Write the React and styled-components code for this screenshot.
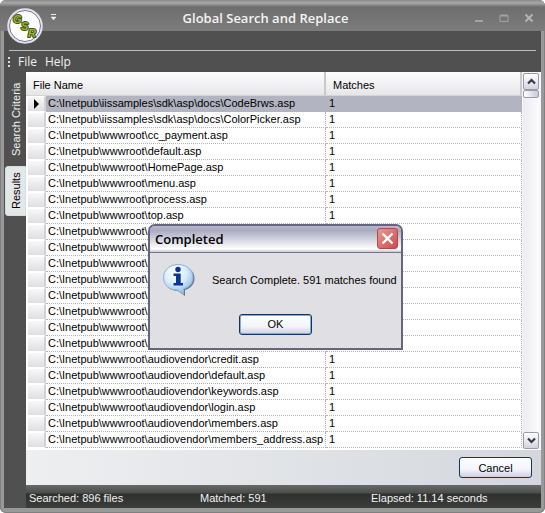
import styled, { createGlobalStyle } from "styled-components";

const root = "C:\\Inetpub\\wwwroot\\";

const Files = [
    "C:\\Inetpub\\iissamples\\sdk\\asp\\docs\\CodeBrws.asp",
    "C:\\Inetpub\\iissamples\\sdk\\asp\\docs\\ColorPicker.asp",
    root + "cc_payment.asp",
    root + "default.asp",
    root + "HomePage.asp",
    root + "menu.asp",
    root + "process.asp",
    root + "top.asp",
    root,
    root,
    root,
    root,
    root,
    root,
    root,
    root,
    root + "audiovendor\\credit.asp",
    root + "audiovendor\\default.asp",
    root + "audiovendor\\keywords.asp",
    root + "audiovendor\\login.asp",
    root + "audiovendor\\members.asp",
    root + "audiovendor\\members_address.asp",
];

const Logo = () => (
    <svg width="36" height="36" viewBox="0 0 36 36" aria-label="GSR">
        <circle cx="18" cy="18" r="17" fill="#f4f2fa" stroke="#e2e0ea" strokeWidth="1.5" />
        <circle cx="18" cy="18" r="15.5" fill="#fff" stroke="#7a7192" strokeWidth="1" />
        <LogoLetter x="6" y="15">G</LogoLetter>
        <LogoLetter x="14" y="22">S</LogoLetter>
        <LogoLetter x="21" y="29">R</LogoLetter>
    </svg>
);

const InfoIcon = () => (
    <svg width="34" height="34" viewBox="0 0 34 34" aria-hidden="true">
        <defs>
            <radialGradient id="bubble" cx="40%" cy="28%" r="75%">
                <stop offset="0" stopColor="#fff" />
                <stop offset="0.5" stopColor="#d9edfb" />
                <stop offset="1" stopColor="#86b9e4" />
            </radialGradient>
        </defs>
        <path d="M17 3C26 3 32.500 8 32.500 15C32.500 21 29 25 23 27V33L16 28C8 28 3 23 3 16C3 8 9 3 17 3Z" fill="#6b7288" />
        <path d="M16 1.500C25 1.500 31 7 31 14.500C31 20 28 24 21.500 26V31L15 27C7 27 1.500 22 1.500 14.500C1.500 7 8 1.500 16 1.500Z" fill="url(#bubble)" stroke="#8fb2d6" />
        <circle cx="16" cy="6.500" r="2.700" fill="#0b3496" />
        <path d="M11.500 10.500H18.700V20H21V22.500H11.500V20H14V13H11.500Z" fill="#0b3496" />
    </svg>
);

const Chevron = ({ up }) => (
    <svg width="9" height="7" viewBox="0 0 9 7" aria-hidden="true">
        <path d={up ? "M1 5.500L4.500 2L8 5.500" : "M1 1.500L4.500 5L8 1.500"} fill="none" stroke="#383848" strokeWidth="2.200" />
    </svg>
);

const App = () => {
    return (
        <>
            <GlobalStyle />
            <Window>
                <TitleBar>
                    <LogoBox><Logo /></LogoBox>
                    <QuickButton aria-label="Customize">
                        <svg width="7" height="7" viewBox="0 0 7 7">
                            <path d="M1 0.500H6" stroke="#eee" />
                            <path d="M1 3H6L3.500 6Z" fill="#eee" stroke="#eee" strokeWidth="0.500" />
                        </svg>
                    </QuickButton>
                    <Title>Global Search and Replace</Title>
                    <WindowButtons>
                        <WindowButton aria-label="Minimize">
                            <svg width="10" height="10"><path d="M1 8H9" stroke="#a2a2a2" strokeWidth="2" /></svg>
                        </WindowButton>
                        <WindowButton aria-label="Maximize">
                            <svg width="10" height="10"><path d="M1 2.500H9V8.500H1Z" stroke="#a2a2a2" fill="none" /><path d="M1 2.500H9" stroke="#a2a2a2" strokeWidth="2" /></svg>
                        </WindowButton>
                        <WindowButton aria-label="Close">
                            <svg width="10" height="10"><path d="M1.500 1.500L8.500 8.500M8.500 1.500L1.500 8.500" stroke="#b4b4b4" strokeWidth="2" /></svg>
                        </WindowButton>
                    </WindowButtons>
                </TitleBar>
                <Frame>
                    <Ribbon />
                    <MenuBar>
                        <Grip />
                        <MenuItem>File</MenuItem>
                        <MenuItem>Help</MenuItem>
                    </MenuBar>
                    <Workspace>
                        <Tabs role="tablist">
                            <Tab role="tab" aria-selected="false">Search Criteria</Tab>
                            <Tab role="tab" aria-selected="true" $active>Results</Tab>
                        </Tabs>
                        <Panel>
                            <Grid>
                                <TableBox>
                                    <Table>
                                        <colgroup>
                                            <col width="20" />
                                            <col width="280" />
                                            <col />
                                        </colgroup>
                                        <thead>
                                            <tr>
                                                <HeadCell colSpan={2}>File Name</HeadCell>
                                                <HeadCell>Matches</HeadCell>
                                            </tr>
                                        </thead>
                                        <tbody>
                                            {Files.map((file, i) => (
                                                <Row key={i} $selected={i === 0}>
                                                    <MarkCell>
                                                        {i === 0 && <svg width="5" height="10"><path d="M0 0L5 5L0 10Z" /></svg>}
                                                    </MarkCell>
                                                    <Cell>{file}</Cell>
                                                    <Cell $count>1</Cell>
                                                </Row>
                                            ))}
                                        </tbody>
                                    </Table>
                                </TableBox>
                                <ScrollBar>
                                    <ScrollButton aria-label="Scroll up"><Chevron up /></ScrollButton>
                                    <Thumb />
                                    <Track />
                                    <ScrollButton aria-label="Scroll down"><Chevron /></ScrollButton>
                                </ScrollBar>
                            </Grid>
                            <ButtonBar>
                                <XpButton>Cancel</XpButton>
                            </ButtonBar>
                            <StatusBar>
                                <span>Searched: 896 files</span>
                                <span>Matched: 591</span>
                                <span>Elapsed: 11.14 seconds</span>
                            </StatusBar>
                        </Panel>
                    </Workspace>
                </Frame>
                <Overlay>
                    <Dialog role="dialog" aria-labelledby="dialog-title">
                        <DialogTitleBar>
                            <DialogTitle id="dialog-title">Completed</DialogTitle>
                            <CloseButton aria-label="Close dialog">
                                <svg width="13" height="13"><path d="M1.500 1.500L11.500 11.500M11.500 1.500L1.500 11.500" stroke="#fff" strokeWidth="2.400" /></svg>
                            </CloseButton>
                        </DialogTitleBar>
                        <DialogBody>
                            <Message>
                                <InfoIcon />
                                <MessageText>Search Complete. 591 matches found</MessageText>
                            </Message>
                            <XpButton $focused>OK</XpButton>
                        </DialogBody>
                    </Dialog>
                </Overlay>
            </Window>
        </>
    );
};

export default App;

const GlobalStyle = createGlobalStyle`
    * {
        box-sizing: border-box;
    }
    body {
        margin: 0;
        background: #fff;
        font-family: "Liberation Sans", Arial, sans-serif;
        font-size: 11px;
        color: #000;
    }
    button {
        font: inherit;
        padding: 0;
        border: 0;
        background: none;
        color: inherit;
    }
    svg {
        display: block;
        flex-shrink: 0;
    }
`;

const Window = styled.div`
    position: relative;
    display: flex;
    flex-direction: column;
    min-height: 100vh;
    background: #999;
    border-radius: 6px;
    box-shadow: inset 0 0 0 1px #808080;
    overflow: hidden;
`;

const TitleBar = styled.header`
    display: flex;
    align-items: center;
    height: 31px;
    padding: 4px 7px 0;
    background: linear-gradient(#8a8a8a, #a8a8a8 3px, #8a8a8a 5px, #6e6e6e 7px, #7c7c7c);
`;

const LogoBox = styled.div`
    position: relative;
    z-index: 1;
    width: 36px;
    height: 19px;
`;

const LogoLetter = styled.text`
    font: italic bold 11px/1 "Liberation Sans", sans-serif;
    fill: #93b52c;
    stroke: #47521c;
    stroke-width: 2px;
    stroke-linejoin: round;
    paint-order: stroke;
`;

const QuickButton = styled.button`
    margin-left: 7px;
`;

const Title = styled.h1`
    flex: 1;
    margin: 0;
    text-align: center;
    color: #f4f4f4;
    font: 600 13px/20px "Open Sans", sans-serif;
`;

const WindowButtons = styled.div`
    display: flex;
    gap: 15px;
    padding-right: 4px;
`;

const WindowButton = styled.button`
    width: 10px;
`;

const Frame = styled.div`
    flex: 1;
    display: flex;
    flex-direction: column;
    margin: 0 4px 5px;
    background: #505050;
`;

const Ribbon = styled.div`
    height: 20px;
    margin: 0 5px;
    border-bottom: 1px solid #bdbdbd;
`;

const MenuBar = styled.nav`
    display: flex;
    align-items: center;
    gap: 8px;
    height: 21px;
    padding-left: 4px;
`;

const Grip = styled.div`
    width: 2px;
    height: 10px;
    background: repeating-linear-gradient(#ddd 0 2px, transparent 2px 4px);
`;

const MenuItem = styled.button`
    color: #f2f2f2;
    font: 12px/20px "Open Sans", sans-serif;
`;

const Workspace = styled.main`
    flex: 1;
    display: flex;
`;

const Tabs = styled.div`
    display: flex;
    flex-direction: column;
    width: 22px;
    padding-top: 4px;
`;

const Tab = styled.button`
    writing-mode: vertical-rl;
    transform: rotate(180deg);
    width: 21px;
    height: ${(p) => (p.$active ? "50px" : "90px")};
    padding-top: ${(p) => (p.$active ? "0" : "4px")};
    align-self: flex-end;
    border: ${(p) => (p.$active ? "1px solid #c5e4e4" : "0")};
    border-radius: 0 3px 3px 0;
    background: ${(p) => (p.$active ? "#e4e6e8" : "none")};
    color: ${(p) => (p.$active ? "#000" : "#f0f0f0")};
    text-align: center;
`;

const Panel = styled.div`
    flex: 1;
    display: flex;
    flex-direction: column;
    min-width: 0;
`;

const Grid = styled.div`
    flex: 1;
    display: flex;
    padding-bottom: 1px;
    background: #fff;
`;

const TableBox = styled.div`
    flex: 1;
    min-width: 0;
`;

const Table = styled.table`
    width: 100%;
    table-layout: fixed;
    border-collapse: separate;
    border-spacing: 0;
`;

const HeadCell = styled.th`
    height: 24px;
    padding: 2px 7px 0;
    border-right: 2px solid #c9c9cb;
    border-bottom: 1px solid #d5d5d8;
    background: linear-gradient(#fff, #e6e6e8);
    font-weight: normal;
    text-align: left;
`;

const Row = styled.tr`
    background: ${(p) => (p.$selected ? "#b2b4c2" : "#fff")};
`;

const Cell = styled.td`
    height: 16px;
    padding: 0 0 0 ${(p) => (p.$count ? "3px" : "2px")};
    border-right: 1px dotted #b4b4b4;
    border-bottom: 1px dotted #b4b4b4;
    line-height: 15px;
    white-space: nowrap;
`;

const MarkCell = styled.td`
    padding: 0 0 0 6px;
    border: 1px solid #fff;
    border-left: 2px solid #fff;
    border-right: 2px solid #d2d2d6;
    background: linear-gradient(#f8f8f9, #dedee2);
`;

const ScrollBar = styled.div`
    display: flex;
    flex-direction: column;
    width: 19px;
    padding: 1px 2px 0 1px;
    background: #f6f6fa;
`;

const ScrollButton = styled.button`
    display: flex;
    align-items: center;
    justify-content: center;
    width: 16px;
    height: 17px;
    border: 1px solid #9a9aa8;
    border-radius: 2px;
    background: linear-gradient(#fff, #d4d4e0);
`;

const Thumb = styled.div`
    height: 8px;
    border: 1px solid #9a9aa8;
    border-radius: 2px;
    background: linear-gradient(90deg, #fff, #c8c8d8);
`;

const Track = styled.div`
    flex: 1;
    background: linear-gradient(90deg, #ececf2, #fbfbfd);
`;

const ButtonBar = styled.div`
    display: flex;
    align-items: center;
    justify-content: flex-end;
    height: 35px;
    padding-right: 9px;
    background: linear-gradient(90deg, #eeeff1, #d3d7dd);
`;

const XpButton = styled.button`
    width: 73px;
    height: 21px;
    border: 1px solid #12365f;
    border-radius: 3px;
    background: linear-gradient(#fff, #f4f4fa 60%, #cfcfe2);
    box-shadow: ${(p) => (p.$focused ? "inset 0 0 0 1px #86a8e0" : "none")};
`;

const StatusBar = styled.footer`
    display: grid;
    grid-template-columns: 171px 171px 1fr;
    align-items: center;
    height: 23px;
    padding: 2px 0 0 3px;
    background: linear-gradient(#686a68, #4c4e4c 8px, #2e302e 9px, #3c3e3c);
    color: #f2f2f2;
`;

const Overlay = styled.div`
    position: absolute;
    inset: 0;
    display: flex;
    align-items: center;
    justify-content: center;
    padding: 60px 0 0 6px;
`;

const Dialog = styled.section`
    width: 255px;
    border: 2px solid #65657f;
    border-radius: 7px 7px 0 0;
    background: #e0dfe3;
    overflow: hidden;
`;

const DialogTitleBar = styled.div`
    display: flex;
    align-items: center;
    justify-content: space-between;
    height: 26px;
    padding: 0 3px 0 5px;
    background: linear-gradient(#b8b8cc, #a9a9c0 4px, #d6d6e2 14px, #fff 23px, #c4c4d2);
`;

const DialogTitle = styled.h2`
    margin: 0;
    font: 600 13px/20px "Open Sans", sans-serif;
`;

const CloseButton = styled.button`
    display: flex;
    align-items: center;
    justify-content: center;
    width: 21px;
    height: 21px;
    border: 1px solid #b04a4a;
    border-radius: 3px;
    background: linear-gradient(135deg, #e89a94, #cf4a48);
`;

const DialogBody = styled.div`
    display: flex;
    flex-direction: column;
    align-items: center;
    gap: 17px;
    padding: 10px 0 13px;
    border-top: 1px solid #77778f;
`;

const Message = styled.div`
    display: flex;
    align-items: center;
    gap: 16px;
    width: 100%;
    padding: 0 8px 0 12px;
`;

const MessageText = styled.p`
    margin: 0;
    line-height: 16px;
    white-space: nowrap;
`;
